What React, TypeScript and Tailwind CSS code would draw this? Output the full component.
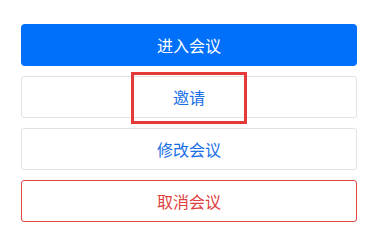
export default function App() {
  const font = { fontFamily: '"Noto Sans CJK SC", "Noto Sans", sans-serif' };
  return (
    <div className="w-[378px] h-[238px] bg-white pt-[24px] pl-[21px]" style={font}>
      <div className="w-[336px] flex flex-col gap-[10px]">
        <button className="h-[42px] w-full rounded-[4px] bg-[#0070fa] text-white text-[16px] flex items-center justify-center">
          进入会议
        </button>
        <div className="relative">
          <button className="h-[42px] w-full rounded-[3px] border border-[#e2e2e2] bg-white text-[#1a6fe6] text-[16px] flex items-center justify-center">
            邀请
          </button>
          <div className="absolute left-[110px] top-[-4px] w-[116px] h-[52px] border-[3px] border-[#e53838] pointer-events-none" />
        </div>
        <button className="h-[42px] w-full rounded-[3px] border border-[#e2e2e2] bg-white text-[#1a6fe6] text-[16px] flex items-center justify-center">
          修改会议
        </button>
        <button className="h-[42px] w-full rounded-[3px] border border-[#e04848] bg-white text-[#e04040] text-[16px] flex items-center justify-center">
          取消会议
        </button>
      </div>
    </div>
  );
}
